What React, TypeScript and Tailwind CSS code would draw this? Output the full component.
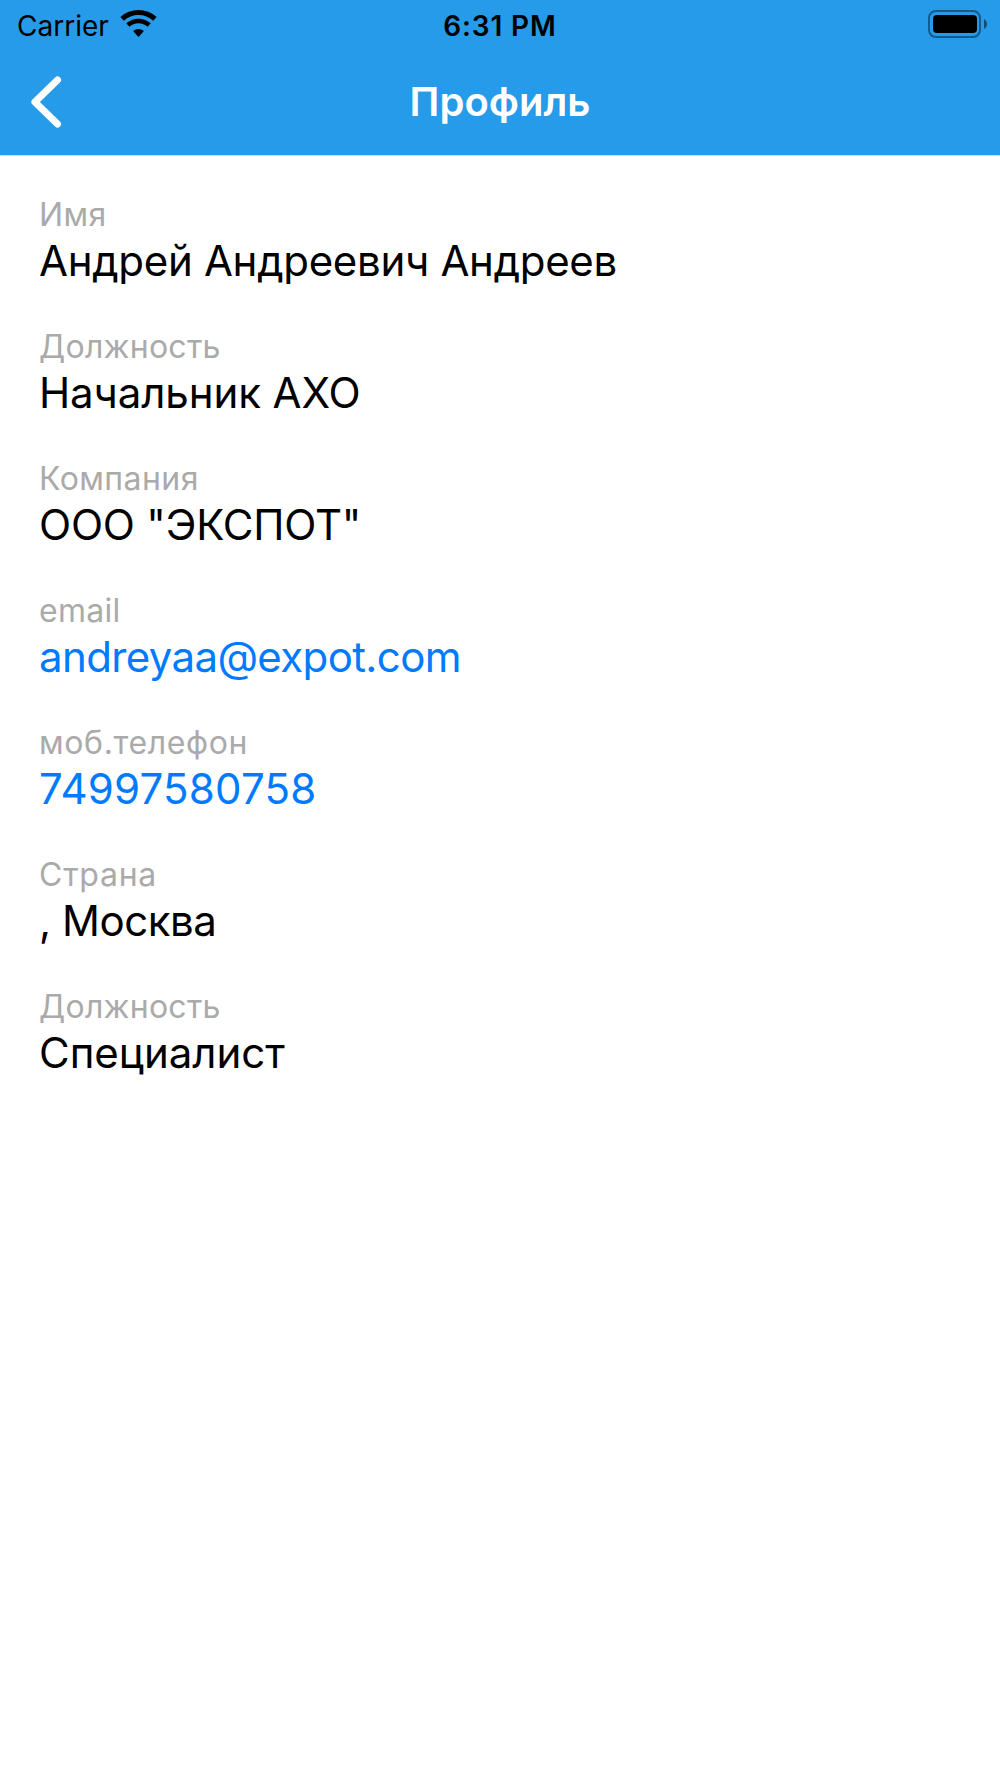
const fields = [
  { label: 'Имя', labelTracking: 'tracking-[0.4px]', value: 'Андрей Андреевич Андреев', tracking: 'tracking-[-0.3px]' },
  { label: 'Должность', labelTracking: 'tracking-[0.25px]', value: 'Начальник АХО', tracking: 'tracking-[-0.1px]' },
  { label: 'Компания', labelTracking: 'tracking-[0.42px]', value: 'ООО "ЭКСПОТ"', tracking: 'tracking-[-0.2px]' },
  { label: 'email', labelTracking: 'tracking-[0.3px]', value: 'andreyaa@expot.com', href: 'mailto:andreyaa@expot.com', tracking: 'tracking-[-0.63px]' },
  { label: 'моб.телефон', labelTracking: 'tracking-[0.62px]', value: '74997580758', href: 'tel:74997580758', tracking: 'tracking-[0.2px]' },
  { label: 'Страна', labelTracking: 'tracking-[0.75px]', value: ', Москва', tracking: 'tracking-[-0.45px]' },
  { label: 'Должность', labelTracking: 'tracking-[0.25px]', value: 'Специалист', tracking: 'tracking-[0px]' },
];

function WifiIcon() {
  return (
    <svg width="37" height="27" viewBox="0 0 37 27" fill="none" stroke="currentColor" className="mb-[5px]">
      <path d="M2.100 8.800A24.500 24.500 0 0 1 34.900 8.800" strokeWidth="5" />
      <path d="M7.800 15.100A16 16 0 0 1 29.200 15.100" strokeWidth="4.700" />
      <path d="M18.500 27L13.100 21.100A8 8 0 0 1 23.900 21.100Z" fill="currentColor" stroke="none" />
    </svg>
  );
}

function BatteryIcon() {
  return (
    <svg width="60" height="28" viewBox="0 0 60 28" className="mb-1 justify-self-end">
      <rect x="1" y="1" width="51" height="26" rx="7" fill="none" stroke="#000" strokeOpacity="0.42" strokeWidth="2" />
      <rect x="5" y="5" width="44" height="18" rx="4" fill="#000" />
      <path d="M56 9c4 2 4 8 0 10z" fill="#000" fillOpacity="0.5" />
    </svg>
  );
}

export default function App() {
  return (
    <div className="min-h-[1778px] w-[1000px] bg-white font-['Inter',sans-serif]">
      <header className="h-[156px] border-b border-[#d5dde3] bg-[#259bea]">
        <div className="grid h-[52px] grid-cols-3 items-center pl-[17px] pr-3 text-[28px] text-black">
          <div className="flex items-center gap-[11px]">
            <span>Carrier</span>
            <WifiIcon />
          </div>
          <span className="-ml-[5px] text-center font-semibold tracking-[0.85px]">6:31 PM</span>
          <BatteryIcon />
        </div>
        <div className="grid h-[100px] grid-cols-3 items-center px-[30px]">
          <button aria-label="Назад" className="w-8">
            <svg width="32" height="52" viewBox="0 0 32 52" fill="none" stroke="white" strokeWidth="7" strokeLinecap="round" strokeLinejoin="round">
              <path d="M27.500 4L4.900 26L27.500 48" />
            </svg>
          </button>
          <h1 className="text-center text-[40px] leading-none font-semibold text-white">Профиль</h1>
        </div>
      </header>
      <main className="flex flex-col px-[39px] pt-[38px]">
        {fields.map((f, i) => (
          <div key={i} className="h-[132px]">
            <div className={`text-[32px] leading-[42px] text-[#aaa] ${f.labelTracking}`}>{f.label}</div>
            <div className={`text-[42px] leading-[50px] text-black ${f.tracking}`}>
              {f.href ? <a href={f.href} className="text-[#007aff]">{f.value}</a> : f.value}
            </div>
          </div>
        ))}
      </main>
    </div>
  );
}
